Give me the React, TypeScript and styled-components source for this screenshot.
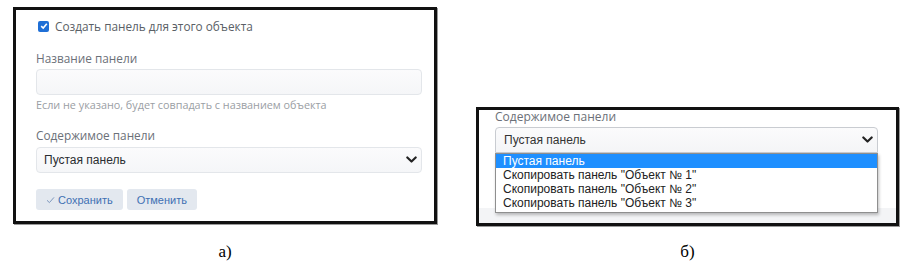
import React from "react";
import styled, { createGlobalStyle } from "styled-components";

const Global = createGlobalStyle`
  html, body { margin: 0; padding: 0; background: #fff; }
  body { width: 919px; height: 267px; overflow: hidden; }
`;

const Page = styled.div`
  display: grid;
  grid-template-columns: 424px 423px;
  grid-template-rows: 219px auto;
  column-gap: 39px;
  row-gap: 16px;
  padding: 7px 0 0 13px;
`;

const Panel = styled.div<{ $align: "start" | "end"; $h: number }>`
  align-self: ${(p) => p.$align};
  height: ${(p) => p.$h}px;
  box-sizing: border-box;
  border: 3px solid #111;
  box-shadow: 1px 1px 0 #9a9a9a;
  background: #fff;
  font-family: "Open Sans", "Noto Sans", sans-serif;
  display: flex;
  flex-direction: column;
  overflow: hidden;
`;

const LeftBody = styled.div`
  display: flex;
  flex-direction: column;
  padding: 6px 12px 0 20px;
`;

const CheckRow = styled.label`
  display: flex;
  align-items: center;
  gap: 6px;
  height: 18px;
  margin-top: 1px;
  padding-left: 2px;
  font-size: 11.8px;
  color: #5a5f66;
`;

const Check = styled.span`
  width: 11px;
  height: 11px;
  border-radius: 2px;
  background: #1f6fd6;
  display: flex;
  align-items: center;
  justify-content: center;
`;

const Label = styled.div<{ $mt: number }>`
  margin-top: ${(p) => p.$mt}px;
  font-size: 11.8px;
  line-height: 16px;
  color: #6b7078;
`;

const Field = styled.div<{ $mt: number }>`
  margin-top: ${(p) => p.$mt}px;
  height: 26px;
  box-sizing: border-box;
  border: 1px solid #e3e6ea;
  border-radius: 4px;
  background: linear-gradient(#fbfbfc, #f5f6f8);
  display: flex;
  align-items: center;
  justify-content: space-between;
  padding: 0 4px 0 7px;
  font-family: "Liberation Sans", Arial, sans-serif;
  font-size: 12px;
  color: #2a2d31;
`;

const Hint = styled.div`
  margin-top: 3px;
  font-size: 10.8px;
  line-height: 14px;
  color: #9a9ea4;
`;

const Buttons = styled.div`
  display: flex;
  gap: 4px;
  margin-top: 16px;
`;

const Btn = styled.div`
  height: 21px;
  padding: 0 10px;
  border-radius: 3px;
  background: #e3e8ef;
  display: flex;
  align-items: center;
  gap: 3px;
  font-family: "Liberation Sans", Arial, sans-serif;
  font-size: 11px;
  color: #3f70b3;
`;

const RightBody = styled.div`
  display: flex;
  flex-direction: column;
  flex: 1;
  padding: 0 18px 0 16px;
`;

const RLabel = styled.div`
  font-size: 12px;
  line-height: 14px;
  color: #6b7078;
`;

const SelectWrap = styled.div`
  position: relative;
  margin-top: 3px;
`;

const RSelect = styled.div`
  height: 26px;
  box-sizing: border-box;
  border: 1px solid #c9ccd1;
  border-radius: 4px 4px 0 0;
  background: linear-gradient(#fbfbfc, #f4f5f7);
  display: flex;
  align-items: center;
  justify-content: space-between;
  padding: 0 4px 0 8px;
  font-family: "Liberation Sans", Arial, sans-serif;
  font-size: 12px;
  color: #333;
`;

const List = styled.div`
  position: absolute;
  left: 0;
  right: 0;
  top: 26px;
  z-index: 2;
  background: #fff;
  border: 1px solid #8f8f8f;
  box-shadow: 1px 2px 3px rgba(0, 0, 0, 0.25);
  padding-bottom: 2px;
  font-family: "Liberation Sans", Arial, sans-serif;
  font-size: 12px;
  color: #222;
`;

const Item = styled.div<{ $active?: boolean }>`
  height: 14px;
  line-height: 14px;
  padding-left: 7px;
  background: ${(p) => (p.$active ? "#1e8fff" : "transparent")};
  color: ${(p) => (p.$active ? "#fff" : "#222")};
`;

const Strip = styled.div`
  margin-top: auto;
  height: 15px;
  background: #f3f4f6;
  margin-left: -16px;
  margin-right: -18px;
`;

const Caption = styled.div`
  justify-self: center;
  font-family: "Liberation Serif", "Times New Roman", serif;
  font-size: 17px;
  line-height: 20px;
  color: #000;
`;

const Chevron = ({ w = 11 }: { w?: number }) => (
  <svg width={w} height={w * 0.7} viewBox="0 0 10 7">
    <path d="M1.2 1.4 L5 5 L8.8 1.4" fill="none" stroke="#222" strokeWidth="2" strokeLinecap="round" strokeLinejoin="round" />
  </svg>
);

export default function App() {
  return (
    <>
      <Global />
      <Page>
        <Panel $align="start" $h={217}>
          <LeftBody>
            <CheckRow>
              <Check>
                <svg width="8" height="8" viewBox="0 0 8 8">
                  <path d="M1.2 4.2 L3.2 6 L6.8 1.8" fill="none" stroke="#fff" strokeWidth="1.6" />
                </svg>
              </Check>
              Создать панель для этого объекта
            </CheckRow>
            <Label $mt={15}>Название панели</Label>
            <Field $mt={3} />
            <Hint>Если не указано, будет совпадать с названием объекта</Hint>
            <Label $mt={15}>Содержимое панели</Label>
            <Field $mt={4}>
              Пустая панель
              <Chevron />
            </Field>
            <Buttons>
              <Btn>
                <svg width="9" height="8" viewBox="0 0 9 8">
                  <path d="M1 4.3 L3.4 6.6 L8 1.4" fill="none" stroke="#7d97bd" strokeWidth="1" />
                </svg>
                Сохранить
              </Btn>
              <Btn>Отменить</Btn>
            </Buttons>
          </LeftBody>
        </Panel>
        <Panel $align="end" $h={119}>
          <RightBody>
            <RLabel>Содержимое панели</RLabel>
            <SelectWrap>
              <RSelect>
                Пустая панель
                <Chevron />
              </RSelect>
              <List>
                <Item $active>Пустая панель</Item>
                <Item>Скопировать панель "Объект № 1"</Item>
                <Item>Скопировать панель "Объект № 2"</Item>
                <Item>Скопировать панель "Объект № 3"</Item>
              </List>
            </SelectWrap>
            <Strip />
          </RightBody>
        </Panel>
        <Caption>а)</Caption>
        <Caption>б)</Caption>
      </Page>
    </>
  );
}
